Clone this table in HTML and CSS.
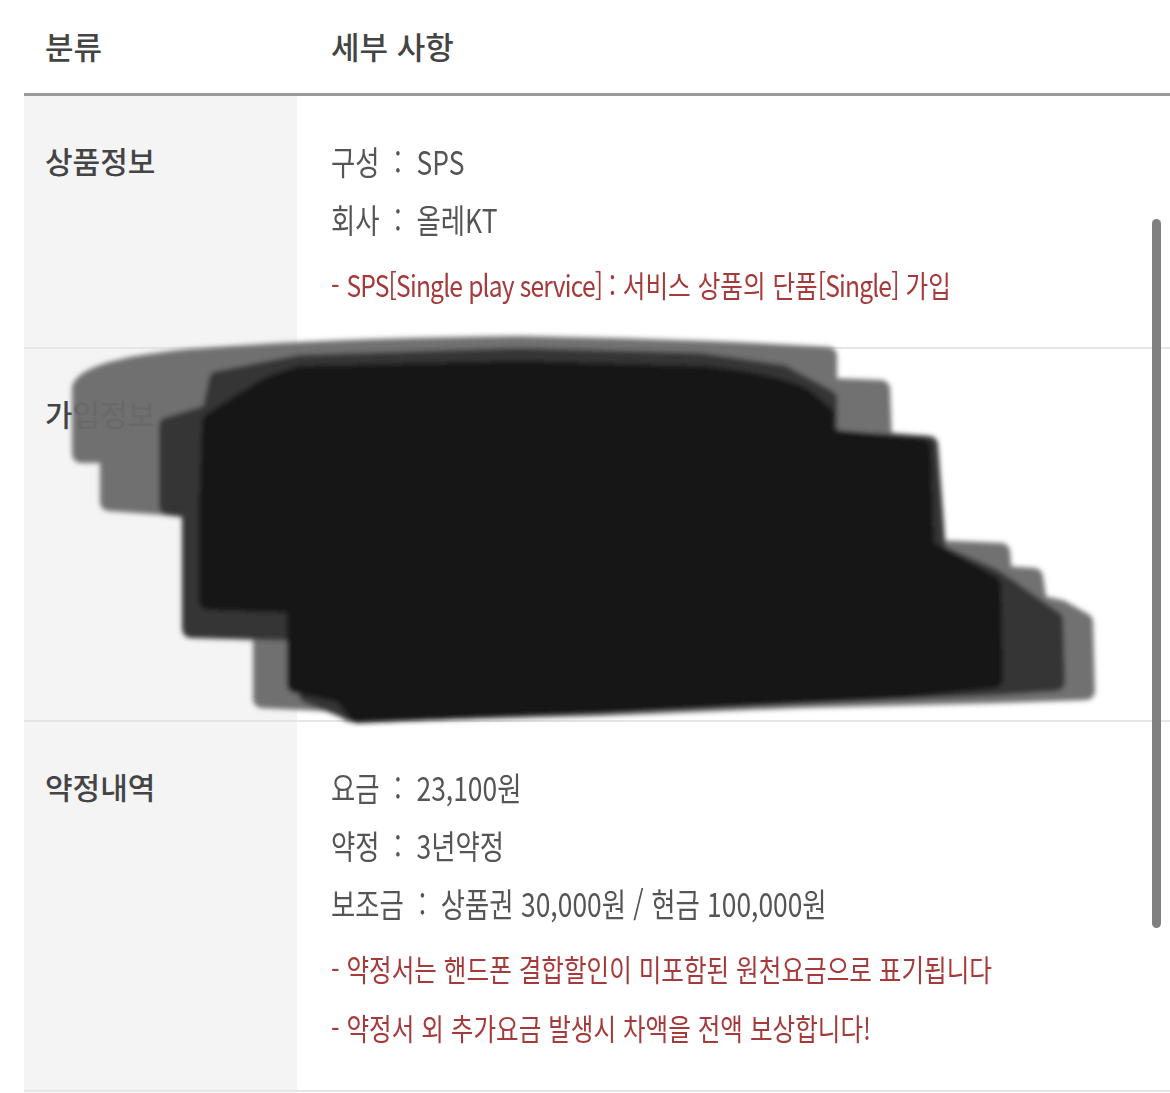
FILE: index.html
```html
<!DOCTYPE html>
<html lang="ko">
<head>
<meta charset="utf-8">
<title>상품 상세</title>
<link rel="stylesheet" href="styles.css">
</head>
<body>
<div class="page">
  <div class="table">
    <div class="row head">
      <div class="cell label">분류</div>
      <div class="cell detail">세부 사항</div>
    </div>
    <div class="row">
      <div class="cell label side">상품정보</div>
      <div class="cell detail">
        <div class="line"><span class="cond">구성 &nbsp;:&nbsp; SPS</span></div>
        <div class="line"><span class="cond">회사 &nbsp;:&nbsp; 올레KT</span></div>
        <div class="note first-note"><span class="cond">- <span class="lat">SPS[Single play service]</span> : 서비스 상품의 단품<span class="lat">[Single]</span> 가입</span></div>
      </div>
    </div>
    <div class="row">
      <div class="cell label side">가입정보</div>
      <div class="cell detail redacted"></div>
    </div>
    <div class="row">
      <div class="cell label side">약정내역</div>
      <div class="cell detail">
        <div class="line"><span class="cond">요금 &nbsp;:&nbsp; 23,100원</span></div>
        <div class="line"><span class="cond">약정 &nbsp;:&nbsp; 3년약정</span></div>
        <div class="line"><span class="cond">보조금 &nbsp;:&nbsp; 상품권 30,000원 / 현금 100,000원</span></div>
        <div class="note first-note"><span class="cond">- 약정서는 핸드폰 결합할인이 미포함된 원천요금으로 표기됩니다</span></div>
        <div class="note"><span class="cond">- 약정서 외 추가요금 발생시 차액을 전액 보상합니다!</span></div>
      </div>
    </div>
  </div>

  <svg class="scribble" width="1170" height="1093" viewBox="0 0 1170 1093" aria-hidden="true">
    <defs>
      <filter id="soft" x="-5%" y="-5%" width="110%" height="110%">
        <feGaussianBlur stdDeviation="2.8"/>
      </filter>
    </defs>
    <g filter="url(#soft)" stroke-width="18" stroke-linejoin="round">
      <path opacity="0.96" fill="#6c6c6c" stroke="#6c6c6c" d="M81,388 Q90,368 190,358 Q330,347 520,345 Q700,348 828,356 L828,387 L881,389 L883,441 L928,445 L933,549 L1001,552 L1003,575 L1034,577 L1038,604 L1061,609 L1084,622 L1086,691 L1000,694 L800,699 L600,707 L350,713 L344,703 L262,699 L262,631 L192,628 L192,508 L109,502 L109,454 L81,454 Z"/>
      <path fill="#363636" stroke="#363636" d="M168,426 L211,413 L218,380 L300,364 L520,357 L700,362 L782,374 L828,399 L828,440 L929,445 L937,553 L994,578 L1044,613 L1054,620 L1056,682 L1000,686 L800,695 L600,705 L354,713 L308,694 L308,632 L191,629 L191,509 L168,506 Z"/>
      <path fill="#121212" stroke="#121212" d="M271,385 L300,375 L520,370 L700,375 Q775,382 805,398 L825,415 L825,438 L922,448 L925,548 L992,585 L994,679 L900,689 L600,704 L358,714 L343,694 L296,684 L296,604 L208,601 L208,513 L211,422 L242,402 Z"/>
    </g>
  </svg>
  <div class="scrollbar"></div>
</div>
</body>
</html>
```

FILE: styles.css
```css
html, body {
  margin: 0;
  padding: 0;
  background: #ffffff;
}

body {
  font-family: "Noto Sans CJK KR", "Noto Sans", sans-serif;
  color: #444444;
  overflow: hidden;
}

.page {
  position: relative;
  width: 1170px;
  height: 1093px;
  overflow: hidden;
}

.table {
  margin-left: 24px;
}

.row {
  display: grid;
  grid-template-columns: 273px 1fr;
  border-bottom: 2px solid #e6e6e6;
}

.row.head {
  border-bottom: 3px solid #9a9a9a;
}

.cell {
  box-sizing: border-box;
}

.head .cell {
  height: 93px;
  display: flex;
  align-items: center;
  font-size: 31px;
  font-weight: 500;
  color: #444444;
  padding-bottom: 2px;
}

.label {
  padding-left: 21px;
}

.side {
  background: #f4f4f4;
  padding-top: 38px;
  font-size: 30px;
  font-weight: 500;
  line-height: 52px;
  color: #444444;
}

.detail {
  padding-left: 34px;
}

.row:not(.head) .detail {
  padding-top: 36px;
  padding-bottom: 33px;
}

.redacted {
  min-height: 371px;
}

.line {
  height: 58px;
  line-height: 58px;
  font-size: 33px;
  color: #555555;
  white-space: nowrap;
}

.note {
  height: 59px;
  line-height: 59px;
  font-size: 30px;
  color: #a63a3a;
  white-space: nowrap;
}

.first-note {
  margin-top: 7px;
}

.cond {
  display: inline-block;
  transform: scaleX(0.8);
  transform-origin: left center;
}

.note .cond {
  transform: scaleX(0.82);
}

.lat {
  letter-spacing: -1px;
}

.scribble {
  position: absolute;
  left: 0;
  top: 0;
  pointer-events: none;
}

.scrollbar {
  position: absolute;
  left: 1152px;
  top: 219px;
  width: 9px;
  height: 709px;
  border-radius: 5px;
  background: #808080;
}
```
